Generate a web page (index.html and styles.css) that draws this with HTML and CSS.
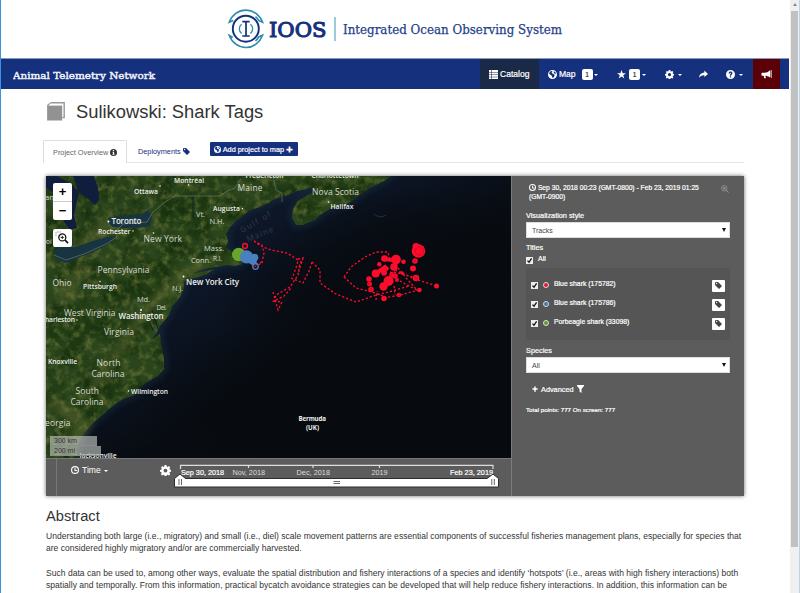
FILE: index.html
```html
<!DOCTYPE html>
<html lang="en">
<head>
<meta charset="utf-8">
<title>Sulikowski: Shark Tags</title>
<link rel="stylesheet" href="styles.css">
</head>
<body>
<svg class="defs" width="0" height="0" aria-hidden="true">
  <symbol id="globe" viewBox="0 0 16 16"><path fill-rule="evenodd" d="M8 0a8 8 0 1 0 0 16A8 8 0 0 0 8 0zM3 3l3-1.400 2 .8-1.500 2L7.500 6 10 7l2 2-1 2.500-2 2.500-1.500-.5L7 10.500 4.500 8.500 2 7zM10.500 2l3 2.500L14 7l-2-.5L10 4.500z"/></symbol>
  <symbol id="tag" viewBox="0 0 16 16"><path fill-rule="evenodd" d="M0 2v5l8.500 8.500a1 1 0 0 0 1.400 0l5.600-5.600a1 1 0 0 0 0-1.400L7 0H2a2 2 0 0 0-2 2zm3.700-.1a1.500 1.500 0 1 1 0 3 1.500 1.500 0 0 1 0-3z"/></symbol>
  <symbol id="plus" viewBox="0 0 16 16"><path d="M6 1h4v5h5v4h-5v5H6v-5H1V6h5z"/></symbol>
  <symbol id="clock" viewBox="0 0 16 16"><path fill-rule="evenodd" d="M8 0a8 8 0 1 0 0 16A8 8 0 0 0 8 0zm0 2.300a5.700 5.700 0 1 1 0 11.400A5.700 5.700 0 0 1 8 2.300zM7 4h2v4h3v2H7z"/></symbol>
  <symbol id="cog" viewBox="0 0 16 16"><path fill-rule="evenodd" d="M6.700 0h2.600l.5 2.200 1.300.6 1.900-1.200 1.900 1.900-1.200 1.900.5 1.200 2.200.5v2.600l-2.200.5-.5 1.300 1.200 1.900-1.900 1.900-1.900-1.200-1.300.5-.5 2.200H6.700l-.5-2.200-1.200-.5-1.900 1.200-1.900-1.900 1.200-1.900-.6-1.300L0 9.700V7.100l2.200-.5.5-1.200-1.200-1.900 1.900-1.900L5 2.800l1.200-.6zM8 5.300a2.800 2.800 0 1 0 0 5.600 2.800 2.800 0 0 0 0-5.600z"/></symbol>
  <symbol id="check" viewBox="0 0 7 7"><path d="M0 0h7v7H0z" fill="#ededed"/><path d="M1.500 3.600l1.500 1.700 2.600-4" fill="none" stroke="#111" stroke-width="1.300"/></symbol>
</svg>

<div class="page">
  <main class="view">
    <header class="masthead">
      <svg class="logo" width="340" height="46" viewBox="225 6 340 46">
        <g fill="none" stroke="#2b8cab" stroke-width="1.600">
          <path d="M233.200 20.600L229.200 22.300A18 19.500 0 0 1 262.600 22.300L259 20.600A15.500 15.500 0 0 0 255.500 16.600"/>
          <path d="M232.800 37.400L229.200 35.300A18 19.500 0 0 0 262.600 35.300L258.600 37A15.500 15.500 0 0 1 255.500 41"/>
          <path d="M241.600 24.200a5.800 5.800 0 0 0 0 9.200M250.400 24.200a5.800 5.800 0 0 1 0 9.200" stroke-width="1.300"/>
        </g>
        <circle cx="245.800" cy="28.700" r="13" fill="none" stroke="#15307c" stroke-width="1.900"/>
        <path d="M242.300 21.600h7.400M242.300 36h7.400M246 21.600V36" fill="none" stroke="#15307c" stroke-width="1.700"/>
        <text x="269" y="36.700" class="logo-name" textLength="57.500" lengthAdjust="spacingAndGlyphs">IOOS</text>
        <path d="M335 17v24" stroke="#4aa0b8" stroke-width="1.100"/>
        <text x="343" y="33.500" class="logo-sub" textLength="219" lengthAdjust="spacingAndGlyphs">Integrated Ocean Observing System</text>
      </svg>
    </header>

    <nav class="bar">
      <svg class="brand" width="146" height="20" viewBox="0 0 146 20"><text x="0" y="13.500" textLength="142" lengthAdjust="spacingAndGlyphs">Animal Telemetry Network</text></svg>
      <a class="item catalog"><svg width="9" height="9" viewBox="0 0 16 16"><path d="M0 0h4v3.500H0zM5 0h11v3.500H5zM0 4.500h4V8H0zM5 4.500h11V8H5zM0 9h4v3H0zM5 9h11v3H5zM0 13h4v3H0zM5 13h11v3H5z"/></svg><span>Catalog</span></a>
      <a class="item map-link"><svg width="9" height="9"><use href="#globe"/></svg><span>Map</span><b class="badge">1</b><i class="caret"></i></a>
      <a class="item star"><svg width="9" height="9" viewBox="0 0 16 16"><path d="M8 0l2 5.800h6l-4.900 3.500L13 15.200 8 11.600 3 15.200l1.900-5.900L0 5.800h6z"/></svg><b class="badge">1</b><i class="caret"></i></a>
      <a class="item gear"><svg width="9" height="9"><use href="#cog"/></svg><i class="caret"></i></a>
      <a class="item share"><svg width="9" height="9" viewBox="0 0 16 16"><path d="M9.500 1L16 7l-6.500 5.500V9.200C5 9 2 10.500 0 14 .5 8 4 4.700 9.500 4.500z"/></svg></a>
      <a class="item help"><svg width="9" height="9" viewBox="0 0 16 16"><path fill-rule="evenodd" d="M8 0a8 8 0 1 0 0 16A8 8 0 0 0 8 0zM4.700 6C4.700 3.800 6 2.800 8 2.800s3.500 1 3.500 2.900C11.500 8 9.200 8 9.200 10H6.800c0-3 2-2.800 2-4.200 0-.6-.3-1-.9-1-.7 0-1 .5-1 1.200zM6.800 11h2.400v2.400H6.800z"/></svg><i class="caret"></i></a>
      <a class="item horn"><svg width="11" height="9" viewBox="0 0 18 16"><path d="M16 1v12h-1.500C12 11 9 10.300 7 10.200l1 4.300H5L4 10.200H1.500A1.500 1.500 0 0 1 0 8.700V6.500A1.500 1.500 0 0 1 1.500 5H6c3 0 6-1.500 8.500-4zM17 0h1v14h-1z"/></svg></a>
    </nav>

    <section class="content">
      <div class="heading">
        <svg width="18" height="19" viewBox="0 0 18 19"><path d="M4 .8h13.200v14.700h-1.800" fill="none" stroke="#999" stroke-width="1.400"/><path d="M.7 18.500V3.200L3.800.6" fill="none" stroke="#999" stroke-width="1.200"/><path d="M.8 3.600h14.400v14.900H.8z" fill="#929292"/></svg>
        <h1>Sulikowski: Shark Tags</h1>
      </div>

      <div class="tabs">
        <a class="tab active">Project Overview <svg width="7" height="7" viewBox="0 0 16 16"><path fill-rule="evenodd" d="M8 0a8 8 0 1 0 0 16A8 8 0 0 0 8 0zM6.500 2.500h3v2.300h-3zM5.500 6.200h4v5h1.200v2h-5.200v-2h1.200v-3H5.500z"/></svg></a>
        <a class="tab">Deployments <svg width="7" height="7"><use href="#tag"/></svg></a>
        <a class="add"><svg width="7" height="7"><use href="#globe"/></svg><span>Add project to map</span><svg width="7" height="7"><use href="#plus"/></svg></a>
      </div>

      <div class="explorer">
        <div class="left">
          <div class="map">
            <svg class="terrain" width="465" height="282" viewBox="46 176 465 282">
              <defs>
                <linearGradient id="sea" x1="0" y1="0" x2=".75" y2=".7"><stop offset="0" stop-color="#101b30"/><stop offset=".5" stop-color="#0d1627"/><stop offset=".8" stop-color="#080c12"/><stop offset="1" stop-color="#070b10"/></linearGradient>
                <radialGradient id="deep"><stop offset="0" stop-color="#070b10"/><stop offset=".6" stop-color="#070b10" stop-opacity=".8"/><stop offset="1" stop-color="#070b10" stop-opacity="0"/></radialGradient>
                <linearGradient id="land" x1="0" y1="0" x2="1" y2="1"><stop offset="0" stop-color="#2b451d"/><stop offset=".5" stop-color="#2a451b"/><stop offset="1" stop-color="#33491f"/></linearGradient>
                <filter id="grain" x="0" y="0" width="100%" height="100%" color-interpolation-filters="sRGB"><feTurbulence type="fractalNoise" baseFrequency=".13" numOctaves="5" seed="8" result="n"/><feColorMatrix in="n" values="0 0 0 0 .42  0 0 0 0 .46  0 0 0 0 .22  1.800 0 0 0 -.82" result="c"/><feComposite in="c" in2="SourceAlpha" operator="in"/></filter>
                <filter id="shade" x="0" y="0" width="100%" height="100%" color-interpolation-filters="sRGB"><feTurbulence type="fractalNoise" baseFrequency=".05" numOctaves="5" seed="3" result="n"/><feColorMatrix in="n" values="0 0 0 0 .08  0 0 0 0 .18  0 0 0 0 .05  2.400 0 0 0 -.95" result="c"/><feComposite in="c" in2="SourceAlpha" operator="in"/></filter>
                <filter id="soft" x="-20%" y="-20%" width="140%" height="140%"><feGaussianBlur stdDeviation="3"/></filter>
                <path id="coast" d="M46 176H391L384 181 370 188 362 193 357 197 349 203 341 206 330 209 320 215 315 220 307 223 303 225 296 225 292 218 293 209 298 201 306 196 316 191 311 188 303 190 297 191 288 195 277 198 268 203 260 207 250 210 243 216 236 221 230 227 226 234 228 241 226 247 232 252 237 256 240 254 243 258 242 264 235 266 227 265 218 267 208 268 200 270 192 274 215 269 205 275 191 279 184 281 184 288 180 297 172 307 169 315 165 320 160 326 156 334 151 340 160 334 161 345 164 358 164 369 158 376 147 382 139 388 135 395 126 398 118 402 107 411 100 417 92 424 84 433 79 442 77 450 79 458H46z"/>
              </defs>
              <path fill="url(#sea)" d="M46 176h465v282H46z"/>
              <ellipse cx="430" cy="300" rx="210" ry="115" fill="url(#deep)"/>
              <ellipse cx="400" cy="410" rx="260" ry="110" fill="url(#deep)"/>
              <use href="#coast" fill="none" stroke="#1c3448" stroke-width="6" opacity=".5" filter="url(#soft)"/>
              <use href="#coast" fill="url(#land)"/>
              <use href="#coast" filter="url(#shade)"/>
              <g fill="none" stroke="#59622f" filter="url(#soft)" opacity=".5"><path d="M92 390L130 335 150 305 182 277 205 262" stroke-width="9"/><path d="M50 400L85 425 70 450" stroke-width="12"/><path d="M80 250L110 222 125 232" stroke-width="12"/><path d="M60 300L85 265" stroke-width="14"/></g>
              <g fill="none" stroke="#16300f" filter="url(#soft)" opacity=".6"><path d="M60 360L95 325 125 295 170 262" stroke-width="10"/><path d="M160 215L190 200 195 225" stroke-width="18"/><path d="M46 330L85 310" stroke-width="9"/></g>
              <use href="#coast" filter="url(#grain)"/>
              <g fill="#101d3c">
                <path d="M46 176H57L70 183 79 192 76 206 74 215 77 228 70 230 64 222 58 195 46 188z"/>
                <path d="M73 176H94L98 188 99 200 95 205 87 198 79 192z"/>
              </g>
              <path fill="#173440" d="M108 218L118 216 142 214 148 210 152 216 150 226 138 228 126 228 112 227 109 223z"/>
              <path fill="#173440" d="M54 252L58 247 75 247 96 240 112 236 116 238 108 244 95 251 80 257 66 263 57 259z"/>
              <g fill="none" stroke="#101f2e" stroke-width=".9"><path d="M152 310l4 13 3 9M148 318l5 13M193 197v20" /></g>
              <g fill="none" stroke="#8c9488" stroke-width=".6" opacity=".8"><path d="M54 255l12 5 18-6 22-10 11-7 0-4M117 230l6-6 24-2 6-10 12-10 10-6h45l7-5 8-3 6-9M273 176l3 14 6 3v9"/></g>
              <path d="M374 214q6 5 12 1M313 180h17" fill="none" stroke="#55514a" stroke-width=".8" opacity=".6"/>

              <g class="region">
                <text x="237.500" y="190.500" textLength="25">Maine</text><text x="312" y="194.500" textLength="47">Nova Scotia</text>
                <text x="196" y="216.500" textLength="9" class="r7">Vt.</text><text x="209.500" y="223.500" textLength="15" class="r7">N.H.</text>
                <text x="143.500" y="242" textLength="38.500">New York</text><text x="204" y="250.500" textLength="20" class="r7">Mass.</text>
                <text x="191" y="262.500" textLength="20" class="r7">Conn.</text><text x="213" y="260.500" textLength="9" class="r6">R.I.</text>
                <text x="97.500" y="273" textLength="52">Pennsylvania</text><text x="52.500" y="285.500" textLength="19">Ohio</text>
                <text x="172" y="290.500" textLength="11" class="r7">N.J.</text><text x="137" y="302" textLength="13" class="r7">Md.</text>
                <text x="156.500" y="310" textLength="10" class="r6">Del.</text><text x="64" y="315.500" textLength="51.500">West Virginia</text>
                <text x="104" y="334.500" textLength="30">Virginia</text><text x="96.500" y="365.500" textLength="24">North</text>
                <text x="91.500" y="377" textLength="33">Carolina</text><text x="75.500" y="393.500" textLength="23.500">South</text>
                <text x="70.500" y="405" textLength="33">Carolina</text><text x="45" y="426" textLength="25.500">eorgia</text><text x="45" y="199.500" class="r7">an</text><text x="46" y="244" class="r6">oi</text>
              </g>
              <g class="city">
                <text x="174" y="183" textLength="30">Montréal</text><text x="134" y="193.500" textLength="24">Ottawa</text>
                <text x="245.500" y="178" textLength="38">Fredericton</text><text x="311.500" y="178" textLength="47">Charlottetown</text>
                <text x="213" y="211" textLength="27">Augusta</text><text x="330.500" y="208.500" textLength="23">Halifax</text>
                <text x="111.500" y="224" textLength="30" class="big">Toronto</text><text x="98" y="233.500" textLength="32.500">Rochester</text>
                <text x="83" y="289" textLength="34">Pittsburgh</text><text x="186" y="284.500" textLength="53" class="big">New York City</text>
                <text x="118.500" y="318.500" textLength="45" class="big">Washington</text><text x="45" y="322" textLength="30">harleston</text>
                <text x="48" y="363.500" textLength="29">Knoxville</text><text x="131" y="393.500" textLength="37">Wilmington</text>
                <text x="79.500" y="458" textLength="37">Jacksonville</text><text x="298.500" y="421" textLength="27.500" class="b">Bermuda</text><text x="306" y="429.500" textLength="13" class="b">(UK)</text>
              </g>
              <g fill="#fff"><circle cx="160" cy="186" r=".8"/><circle cx="188.500" cy="185" r=".8"/><circle cx="242.500" cy="208.500" r=".7"/><circle cx="328.500" cy="202" r=".8"/><circle cx="108.500" cy="221.500" r="1"/><circle cx="133" cy="231" r=".7"/><circle cx="153.500" cy="233" r=".8"/><circle cx="100" cy="281.500" r=".7"/><circle cx="183.500" cy="276.500" r="1"/><circle cx="141" cy="310" r="1"/><circle cx="77" cy="320" r=".7"/><circle cx="128.500" cy="391" r=".7"/><circle cx="76" cy="455" r=".7"/></g>
              <g class="gulf"><text transform="translate(242 233) rotate(-30)" textLength="34">Gulf of</text><text transform="translate(248 242) rotate(-22)" textLength="28">Maine</text></g>

              <g fill="none" stroke="#ff0c2c" stroke-width="1.300" stroke-dasharray="2.200 2">
                <path d="M254 241L258 244 263 247 271 250 287 253 298 260 297 265 293 276M254 241l8 4 2 8-2 10-8 4M252 266l10-4"/>
                <path d="M298 259l5-1-3 5-2 12-8 12-14 8-3 9M273 292l5 18 4-8-8-1 10-5 8-9M291 278l12 5 6-12 3-9M303 258l-5 16"/>
                <path d="M312 262L320 270 320 283 336 294 356 302 376 295 392 291 409 286"/>
                <path d="M344 277L351 267 365 257 376 252 388 252 390 260M344 277L356 288 372 292 383 296"/>
                <path d="M398 268L407 279 417 290 405 284 394 277M395 270L415 279 437 286M384 298L400 295 419 290M394 272l12 3 10 3M376 300l1-9M394 286l1 9"/>
              </g>
              <path d="M384 259l8 1M396 262l-2 6M378 272l7-5 3 3M392 272l-2 9-7 6" fill="none" stroke="#ff0c2c" stroke-width="4"/>
              <g fill="#ff0c2c"><circle cx="418.500" cy="251" r="6.800"/><circle cx="416" cy="246.500" r="3.500"/><circle cx="415" cy="261" r="2.800"/><circle cx="413" cy="268.500" r="3"/><circle cx="416" cy="278" r="3.300"/><circle cx="436.500" cy="286" r="2.500"/><circle cx="419.500" cy="290" r="2.300"/><circle cx="399" cy="295" r="2.300"/><circle cx="384" cy="298.500" r="2.800"/><circle cx="371" cy="289.500" r="2.800"/><circle cx="369" cy="279" r="2.800"/><circle cx="369.500" cy="284" r="2.500"/><circle cx="375.700" cy="273.500" r="4"/><circle cx="384" cy="272.700" r="3"/><circle cx="379.300" cy="264.300" r="2.200"/><circle cx="384.500" cy="258.500" r="3.300"/><circle cx="396" cy="259.500" r="4.800"/><circle cx="403.500" cy="261.700" r="2.300"/><circle cx="394" cy="267" r="3.800"/><circle cx="388.500" cy="281" r="5"/><circle cx="383.500" cy="286.500" r="4.200"/><circle cx="395" cy="276" r="2.800"/><circle cx="402" cy="273" r="1.800"/><circle cx="397" cy="280" r="2"/></g>
              <g fill="none" stroke="#c00a25" stroke-width=".7"><circle cx="419.500" cy="251" r="4.200"/><circle cx="393" cy="275" r="2"/><circle cx="397" cy="279" r="1.500"/><circle cx="416" cy="278" r="1.500"/><circle cx="415" cy="261" r="1.200"/><circle cx="371" cy="289.500" r="1.200"/><circle cx="399" cy="295" r="1"/><circle cx="369" cy="284" r="1"/></g>
              <circle cx="245" cy="246" r="2.400" fill="none" stroke="#f51032" stroke-width="1.500"/>
              <circle cx="238.800" cy="254.500" r="6.800" fill="#69a52c"/>
              <circle cx="246.500" cy="256.800" r="6.600" fill="#4a80bd"/><circle cx="254.500" cy="257.500" r="3.800" fill="#4a80bd"/><path d="M247 262l9-5 1 7-5 1z" fill="#4a80bd"/><circle cx="255.500" cy="266.500" r="2.800" fill="none" stroke="#4a80bd" stroke-width="1.300"/>
            </svg>
            <div class="zoom"><span>+</span><span>−</span></div>
            <div class="zoom-box"><svg width="14" height="14" viewBox="0 0 14 14"><path d="M1 5V1h6" fill="none" stroke="#777" stroke-width=".7" stroke-dasharray="1.500 1"/><circle cx="7.300" cy="6.400" r="3.500" fill="#fff" stroke="#111" stroke-width="1.300"/><path d="M10 9l3 3.200" stroke="#111" stroke-width="1.700"/><path d="M5.700 6.400h3.200M7.300 4.800V8" stroke="#111" stroke-width=".9"/></svg></div>
            <div class="scales"><div class="km">300 km</div><div class="mi">200 mi</div></div>
          </div>
          <div class="timebar">
            <div class="time"><svg width="8" height="8"><use href="#clock"/></svg><span>Time</span><i class="caret"></i></div>
            <svg class="time-cog" width="11" height="11"><use href="#cog"/></svg>
            <svg class="slider" width="332" height="37" viewBox="170 459 332 37">
              <path d="M180.500 469v-3.700H493V469M248.500 465v3M313 465v3M379.500 465v3" fill="none" stroke="#ddd" stroke-width="1.200"/>
              <g class="ticks"><text x="181" y="474.500" textLength="43" class="end">Sep 30, 2018</text><text x="232.500" y="474.500" textLength="32.500">Nov, 2018</text><text x="296.500" y="474.500" textLength="33.500">Dec, 2018</text><text x="371.500" y="474.500" textLength="16">2019</text><text x="450" y="474.500" textLength="43" class="end">Feb 23, 2019</text></g>
              <path d="M174.500 487v-8.500l5.500-4.500 5.500 4.500H487l6-4.500 5.500 4.500V487z" fill="#fff" stroke="#2b2b2b"/>
              <path d="M179 479v6M181.500 479v6M491.800 479v6M494.300 479v6M333.500 481.500h6.500M333.500 483.500h6.500" stroke="#666"/>
            </svg>
          </div>
        </div>

        <aside class="side">
          <div class="range"><p><svg width="7" height="7"><use href="#clock"/></svg> <span>Sep 30, 2018 00:23 (GMT-0800) - Feb 23, 2019 01:25</span><br>(GMT-0900)</p><svg width="8" height="8" viewBox="0 0 16 16"><path d="M10.500 10.500L15 15M3.500 6.500h6M6.500 3.500v6" stroke="#999" stroke-width="2"/><circle cx="6.500" cy="6.500" r="5.500" fill="none" stroke="#999" stroke-width="1.500"/></svg></div>
          <label class="lbl vis">Visualization style</label>
          <div class="select"><span>Tracks</span><i></i></div>
          <label class="lbl titles">Titles</label>
          <div class="all"><svg class="check" width="7" height="7"><use href="#check"/></svg><span>All</span></div>
          <div class="list">
            <div class="row"><svg class="check" width="7" height="7"><use href="#check"/></svg><i class="dot red"></i><span>Blue shark (175782)</span><b><svg width="7" height="7"><use href="#tag"/></svg></b></div>
            <div class="row"><svg class="check" width="7" height="7"><use href="#check"/></svg><i class="dot blue"></i><span>Blue shark (175786)</span><b><svg width="7" height="7"><use href="#tag"/></svg></b></div>
            <div class="row"><svg class="check" width="7" height="7"><use href="#check"/></svg><i class="dot green"></i><span>Porbeagle shark (33098)</span><b><svg width="7" height="7"><use href="#tag"/></svg></b></div>
          </div>
          <label class="lbl species">Species</label>
          <div class="select"><span>All</span><i></i></div>
          <div class="advanced"><svg width="6" height="6"><use href="#plus"/></svg><span>Advanced</span><svg width="7" height="8" viewBox="0 0 14 16"><path d="M0 0h14v2L9 8v8l-4-3V8L0 2z"/></svg></div>
          <div class="totals">Total points: 777 On screen: 777</div>
        </aside>
      </div>

      <h2>Abstract</h2>
      <div class="text">
        <p>Understanding both large (i.e., migratory) and small (i.e., diel) scale movement patterns are essential components of successful fisheries management plans, especially for species that<br>are considered highly migratory and/or are commercially harvested.</p>
        <p>Such data can be used to, among other ways, evaluate the spatial distribution and fishery interactions of a species and identify ‘hotspots’ (i.e., areas with high fishery interactions) both<br>spatially and temporally. From this information, practical bycatch avoidance strategies can be developed that will help reduce fishery interactions. In addition, this information can be</p>
      </div>
    </section>
  </main>
  <div class="scrollbar"><i></i><div class="thumb"></div></div>
</div>
</body>
</html>
```
FILE: styles.css
```css
* { box-sizing: border-box; }
body { margin: 0; background: #fff; color: #333; font-family: "Liberation Sans", Arial, sans-serif; font-size: 8.54px; overflow: hidden; }
h1, h2, p { margin: 0; font-weight: 400; }
i, b { font-style: normal; }
svg { display: block; flex: none; }
.defs { position: absolute; }
.page { display: flex; width: 800px; height: 593px; border-left: 1px solid #3b93e0; overflow: hidden; }
.view { width: 788px; flex: none; overflow: hidden; }

.masthead { height: 59px; border-bottom: 1px solid #8b97bd; padding: 6px 0 0 224px; }
.logo text { fill: #15307c; font-family: "DejaVu Serif", serif; }
.logo .logo-name { font-size: 21px; stroke: #15307c; stroke-width: 1.100px; }
.logo .logo-sub { font-size: 12.500px; fill: #23408b; stroke: #23408b; stroke-width: .25px; }

.bar { display: flex; height: 30px; padding-right: 9px; background: #15307c; color: #fff; fill: #fff; }
.brand { margin: 6px auto 0 12px; }
.brand text { font: 10px "DejaVu Serif", serif; fill: #f2f4fa; stroke: #f2f4fa; stroke-width: .45px; }
.item { display: flex; align-items: center; height: 30px; font-size: 8.54px; -webkit-text-stroke: .2px #fff; }
.catalog { width: 59px; padding-left: 9px; gap: 2px; background: #1a2945; }
.map-link { width: 68px; padding-left: 9px; gap: 2px; }
.star { width: 48px; padding-left: 10px; gap: 3px; }
.gear { width: 34px; padding-left: 10px; gap: 4px; }
.share { width: 28px; padding-left: 10px; }
.help { width: 36px; padding-left: 9px; gap: 4px; }
.horn { width: 27px; padding-left: 8px; background: #5c0008; }
.badge { width: 11px; height: 11px; border-radius: 2px; background: #fff; color: #444; -webkit-text-stroke: 0; font: 700 6.500px/11px "Liberation Sans", sans-serif; text-align: center; margin-top: 1px; }
.map-link .badge { margin-left: 4px; }
.caret { border: 2px solid transparent; border-top-color: currentColor; border-bottom: 0; margin-top: 1px; }
.badge + .caret { margin-left: -1px; }

.content { width: 698px; margin-left: 45px; }
.heading { display: flex; align-items: center; height: 45px; gap: 11px; padding-left: 1px; }
.heading h1 { font-size: 18.350px; }
.tabs { display: flex; align-items: flex-start; margin: 6px 0 13px -3px; border-bottom: 1px solid #e4e4e4; height: 23px; font-size: 7.320px; }
.tab { display: flex; align-items: center; gap: 2px; height: 23px; padding: 0 9px 0 11px; color: #15307c; fill: #15307c; white-space: nowrap; }
.tab.active { width: 84px; padding: 0 0 0 9px; color: #666; fill: #333; background: #fff; border: 1px solid #ddd; border-bottom: 0; border-radius: 2px 2px 0 0; }
.add { display: flex; align-items: center; gap: 2px; width: 88px; height: 14px; margin: 2px 0 0 11px; padding-left: 4px; background: #15307c; color: #fff; fill: #fff; -webkit-text-stroke: .2px #fff; border-radius: 1px; white-space: nowrap; }

.explorer { display: flex; width: 698px; height: 320px; background: #5c5c5c; box-shadow: 0 0 4px rgba(0,0,0,.6); }
.left { width: 466px; border-right: 1px solid #7b7b7b; }
.map { position: relative; width: 465px; height: 282px; overflow: hidden; }
.terrain text { fill: #d6dad0; }
.region { font-family: "Open Sans", sans-serif; font-size: 8.500px; }
.region .r7 { font-size: 7.500px; }
.region .r6 { font-size: 6.500px; }
.city { font-family: "Open Sans", sans-serif; font-size: 6.700px; font-weight: 600; }
.terrain .city text { fill: #eef0ec; }
.city .big { font-size: 8px; }
.city .b { font-size: 6.200px; font-weight: 700; }
.terrain .gulf text { fill: #333c45; font: 8px "Open Sans", sans-serif; }
.zoom { position: absolute; left: 7px; top: 7px; width: 19px; height: 37px; background: #fff; border-radius: 2px; font: 700 13px/18px "Liberation Sans", sans-serif; color: #000; text-align: center; }
.zoom span { display: block; height: 18px; }
.zoom span + span { border-top: 1px solid #ccc; height: 19px; }
.zoom-box { position: absolute; left: 7px; top: 53px; width: 19px; height: 18px; background: #fff; border-radius: 2px; padding: 2px; }
.scales { position: absolute; left: 4px; top: 260px; font-size: 7px; line-height: 9px; color: #333; }
.scales div { height: 10px; padding-left: 4px; background: rgba(190,195,190,.65); border-bottom: 1px solid #8a8f88; }
.km { width: 47px; }
.mi { width: 51px; }

.timebar { display: flex; height: 38px; border-top: 1px solid #777; color: #fff; fill: #fff; }
.timebar::before { content: ""; width: 10px; border-right: 1px solid #777; }
.time { display: flex; align-items: center; gap: 3px; width: 103px; height: 22px; padding-left: 14px; font-size: 8.540px; }
.time-cog { margin-top: 6px; }
.slider { margin-left: -1px; }
.ticks { fill: #ddd; font-size: 7.300px; }
.ticks .end { fill: #fff; stroke: #fff; stroke-width: .2px; }

.side { width: 232px; padding: 7px 14px 0; color: #fff; fill: #fff; font-size: 7px; -webkit-text-stroke: .2px #fff; }
.range { display: flex; justify-content: space-between; height: 28px; padding: 0 1px 0 3px; line-height: 9px; font-size: 6.720px; }
.range p { white-space: nowrap; }
.range p svg { display: inline-block; vertical-align: -1px; }
.range > svg { margin-top: 2px; }
.lbl { display: block; height: 11px; line-height: 10px; font-size: 7.320px; }
.select { display: flex; align-items: center; justify-content: space-between; height: 16px; padding: 0 3px 0 5px; background: #fff; color: #444; -webkit-text-stroke: 0; border: 1px solid #ddd; }
.select i { border: 2px solid transparent; border-top: 4px solid #111; border-bottom: 0; }
.titles { margin-top: 5px; }
.all { display: flex; height: 14px; gap: 5px; line-height: 10px; }
.check { margin-top: 3px; }
.list { height: 72px; padding: 8px 5px 0; background: #555; }
.row { display: flex; align-items: center; height: 19px; font-size: 6.850px; }
.row .check { margin-top: 0; }
.row span { margin: -5px auto 0 5px; }
.row b { width: 13px; height: 12px; border-radius: 1px; background: #fff; padding: 2.500px 3px; fill: #444; }
.dot { width: 6px; height: 6px; border: 1px solid #ddd; border-radius: 50%; margin-left: 5px; margin-top: -2px; }
.red { background: #f01030; }
.blue { background: #3a78b8; }
.green { background: #5a9c20; }
.species { margin-top: 6px; }
.advanced { display: flex; align-items: center; gap: 3px; height: 12px; margin: 10px 0 0 6px; font-size: 7.320px; }
.totals { margin-top: 11px; font-size: 6.200px; line-height: 8px; }

h2 { margin-top: 11px; font-size: 14.650px; line-height: 18px; }
.text { margin-top: 5px; line-height: 12.200px; white-space: nowrap; letter-spacing: .016px; }
.text p + p { margin-top: 12.200px; }

.scrollbar { flex: none; width: 10px; margin-left: auto; background: #f0f0f0; border-right: 1px solid #b9d4ee; }
.scrollbar i { display: block; width: 0; height: 0; margin: 3px auto 0; border: 2px solid transparent; border-top: 0; border-bottom: 3px solid #888; }
.thumb { height: 536px; margin: 5px 1px 0 1px; background: #c1c1c1; }
```
